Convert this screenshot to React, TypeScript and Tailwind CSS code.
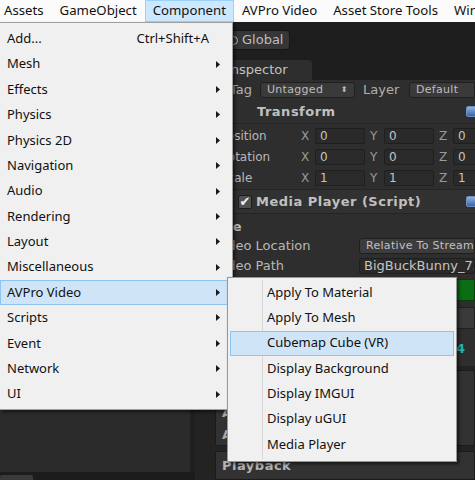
import React from 'react';

type MenuItem = { label: string; shortcut?: string; sub?: boolean; active?: boolean };

const mainItems: MenuItem[] = [
  { label: 'Add...', shortcut: 'Ctrl+Shift+A' },
  { label: 'Mesh', sub: true },
  { label: 'Effects', sub: true },
  { label: 'Physics', sub: true },
  { label: 'Physics 2D', sub: true },
  { label: 'Navigation', sub: true },
  { label: 'Audio', sub: true },
  { label: 'Rendering', sub: true },
  { label: 'Layout', sub: true },
  { label: 'Miscellaneous', sub: true },
  { label: 'AVPro Video', sub: true, active: true },
  { label: 'Scripts', sub: true },
  { label: 'Event', sub: true },
  { label: 'Network', sub: true },
  { label: 'UI', sub: true },
];

const subItems: MenuItem[] = [
  { label: 'Apply To Material' },
  { label: 'Apply To Mesh' },
  { label: 'Cubemap Cube (VR)', active: true },
  { label: 'Display Background' },
  { label: 'Display IMGUI' },
  { label: 'Display uGUI' },
  { label: 'Media Player' },
];

const menuBar = ['Assets', 'GameObject', 'Component', 'AVPro Video', 'Asset Store Tools', 'Window'];

function Arrow() {
  return (
    <svg width="4" height="7" viewBox="0 0 4 7" className="shrink-0">
      <path d="M0 0L4 3.5L0 7Z" fill="#1a1a1a" />
    </svg>
  );
}

function HelpIcon() {
  return (
    <div className="h-[11px] w-[11px] shrink-0 rounded-[2px] border border-[#6d8fc0] bg-gradient-to-b from-[#8fb2e0] to-[#3d66a8]" />
  );
}

function Field({ children, className = '' }: { children?: React.ReactNode; className?: string }) {
  return (
    <div
      className={`flex h-[16px] shrink-0 items-center overflow-hidden whitespace-nowrap rounded-[2px] border border-[#1f1f1f] bg-[#2a2a2a] pl-[4px] text-[#c4c4c4] ${className}`}
    >
      {children}
    </div>
  );
}

function VectorRow({ label, v }: { label: string; v: string }) {
  return (
    <div className="flex h-[21px] items-center overflow-hidden pl-[25px]">
      <span className="w-[81px] shrink-0 text-[#b8b8b8]">{label}</span>
      {['X', 'Y', 'Z'].map((axis) => (
        <div key={axis} className="mr-[5px] flex shrink-0 items-center">
          <span className="w-[14px] shrink-0 text-[#9a9a9a]">{axis}</span>
          <Field className="w-[50px]">{v}</Field>
        </div>
      ))}
    </div>
  );
}

function Inspector() {
  return (
    <div className="flex w-[280px] shrink-0 flex-col overflow-hidden bg-[#222222] font-['DejaVu_Sans',sans-serif] text-[12px]">
      {/* tab strip */}
      <div className="flex h-[22px] items-end bg-[#1e1e1e] pl-[5px]">
        <div className="flex h-[20px] w-[112px] items-center rounded-t-[4px] bg-[#2e2e2e] pl-[27px] text-[13px] text-[#c2c2c2]">
          Inspector
        </div>
      </div>
      <div className="flex flex-col bg-[#2e2e2e]">
        {/* tag / layer */}
        <div className="flex h-[20px] items-center overflow-hidden whitespace-nowrap pl-[35px] text-[#b0b0b0]">
          <span className="w-[30px] shrink-0 text-[13px]">Tag</span>
          <div className="flex h-[16px] w-[95px] shrink-0 items-center justify-between rounded-[3px] border border-[#1f1f1f] bg-[#3a3a3a] px-[6px] text-[11px] tracking-[0.3px] text-[#bdbdbd]">
            Untagged <span className="text-[8px]">⬍</span>
          </div>
          <span className="ml-[8px] w-[46px] shrink-0 text-[13px]">Layer</span>
          <div className="flex h-[16px] flex-1 items-center rounded-l-[3px] border border-[#1f1f1f] bg-[#3a3a3a] px-[6px] text-[11px] tracking-[0.3px] text-[#bdbdbd]">
            Default
          </div>
        </div>
        {/* transform header */}
        <div className="flex h-[24px] items-center justify-between border-b border-[#262626] pl-[62px]">
          <span className="text-[13px] font-bold tracking-[0.5px] text-[#c0c0c0]">Transform</span>
          <div className="-mr-[2px]"><HelpIcon /></div>
        </div>
        <div className="py-[1px]">
          <VectorRow label="Position" v="0" />
          <VectorRow label="Rotation" v="0" />
          <VectorRow label="Scale" v="1" />
        </div>
        {/* media player header */}
        <div className="flex h-[25px] items-center justify-between border-y border-[#242424] bg-[#313131] pl-[43px]">
          <div className="flex items-center">
            <div className="flex h-[14px] w-[14px] items-center justify-center rounded-[2px] border border-[#1c1c1c] bg-[#505050] text-[13px] font-bold leading-none text-[#f0f0f0]">
              ✔
            </div>
            <span className="ml-[4px] text-[13px] font-bold tracking-[0.5px] text-[#c0c0c0]">Media Player (Script)</span>
          </div>
          <div className="-mr-[2px]"><HelpIcon /></div>
        </div>
        <div className="flex h-[22px] items-end pl-[20px] text-[13px] font-bold text-[#bdbdbd]">File</div>
        <div className="flex h-[20px] items-center overflow-hidden pl-[20px]">
          <span className="w-[144px] shrink-0 text-[13px] text-[#b8b8b8]">Video Location</span>
          <div className="flex h-[16px] flex-1 items-center overflow-hidden whitespace-nowrap rounded-l-[3px] border border-[#1f1f1f] bg-[#3c3c3c] pl-[6px] text-[11px] tracking-[0.3px] text-[#c0c0c0]">
            Relative To StreamingAssets
          </div>
        </div>
        <div className="flex h-[20px] items-center overflow-hidden pl-[20px]">
          <span className="w-[144px] shrink-0 text-[13px] text-[#b8b8b8]">Video Path</span>
          <Field className="flex-1 text-[13px]">BigBuckBunny_720p30.mp4</Field>
        </div>
        <div className="flex h-[28px] items-center pl-[20px]">
          <div className="h-[22px] flex-1 border border-[#0b3d0b] bg-[#0c6e14]" />
        </div>
        <div className="flex h-[28px] items-center pl-[20px]">
          <div className="h-[22px] flex-1 rounded-l-[3px] border border-[#202020] bg-[#3a3a3a]" />
        </div>
        <div className="flex h-[34px] items-center justify-end pr-[10px] text-[13px] font-bold text-[#26b3a8]">
          4
        </div>
      </div>
      {/* lower boxes */}
      <div className="flex flex-1 flex-col gap-[5px] bg-[#232323] pl-[20px] pt-[4px]">
        <div className="flex h-[76px] flex-col justify-end gap-[2px] rounded-l-[2px] border border-[#1b1b1b] bg-[#323232] pb-[1px] pl-[6px] text-[13px] font-bold text-[#aaaaaa]">
          <span>Audio</span>
          <span>Aspect</span>
        </div>
        <div className="flex flex-1 items-start rounded-l-[2px] border border-[#1b1b1b] bg-[#323232] pl-[6px] pt-[4px] text-[13px] font-bold tracking-[0.5px] text-[#b4b4b4]">
          Playback
        </div>
      </div>
    </div>
  );
}

export default function App() {
  return (
    <div className="relative flex h-[480px] w-[475px] flex-col overflow-hidden bg-[#1e1e1e] font-['Noto_Sans','Open_Sans',sans-serif]">
      {/* menu bar */}
      <div className="flex h-[22px] items-stretch overflow-hidden bg-[#fbfbfb] text-[13.2px] text-[#111]">
        <div className="-ml-[4px] flex shrink-0">
          {menuBar.map((m) => (
            <div
              key={m}
              className={`flex shrink-0 items-center whitespace-nowrap border px-[7px] ${
                m === 'Component' ? 'border-[#99d1ff] bg-[#cce8ff]' : 'border-transparent'
              }`}
            >
              {m}
            </div>
          ))}
        </div>
      </div>

      {/* toolbar */}
      <div className="flex h-[36px] items-center bg-[#1e1e1e] pl-[222px]">
        <div className="flex h-[20px] items-center rounded-[4px] border border-[#161616] bg-[#363636] px-[6px] font-['DejaVu_Sans',sans-serif] text-[13px] text-[#bdbdbd]">
          <span className="mr-[4px] inline-block h-[9px] w-[9px] rounded-full border border-[#bdbdbd]" />
          Global
        </div>
      </div>

      {/* panes */}
      <div className="flex flex-1">
        <div className="flex w-[195px] shrink-0 flex-col">
          <div className="flex-1 border-r-[5px] border-[#1f1f1f] bg-[#2b2b2b]" />
          <div className="flex h-[8px] items-end bg-[#1c1c1c]">
            <div className="h-[5px] w-[33px] rounded-t-[2px] bg-[#3a3a3a]" />
          </div>
        </div>
        <Inspector />
      </div>

      {/* Component dropdown */}
      <div className="absolute left-0 top-[22px] flex h-[388px] w-[233px] flex-col border border-l-0 border-[#a0a0a0] bg-[#f0f0f0] pt-[3px] text-[13px] text-[#111] shadow-[2px_2px_3px_rgba(0,0,0,0.55)]">
        {mainItems.map((it) => (
          <div
            key={it.label}
            className={`flex h-[25.4px] shrink-0 items-center justify-between border pl-[6px] pr-[11px] ${
              it.active ? 'border-[#90c4f0] bg-[#cfe4f7]' : 'border-transparent'
            }`}
          >
            <span>{it.label}</span>
            {it.shortcut ? <span className="pr-[11px]">{it.shortcut}</span> : null}
            {it.sub ? <Arrow /> : null}
          </div>
        ))}
      </div>

      {/* AVPro Video submenu */}
      <div className="absolute left-[227px] top-[277px] flex h-[185px] w-[230px] flex-col border border-[#979797] bg-[#f0f0f0] pt-[2px] text-[13px] text-[#111] shadow-[2px_2px_3px_rgba(0,0,0,0.55)]">
        <div className="absolute bottom-[2px] left-[34px] top-[2px] w-[1px] bg-[#d7d7d7]" />
        {subItems.map((it) => (
          <div
            key={it.label}
            className={`relative mx-[2px] flex h-[25.3px] shrink-0 items-center border pl-[36px] ${
              it.active ? 'border-[#90c4f0] bg-[#cfe4f7]' : 'border-transparent'
            }`}
          >
            {it.label}
          </div>
        ))}
      </div>
    </div>
  );
}
